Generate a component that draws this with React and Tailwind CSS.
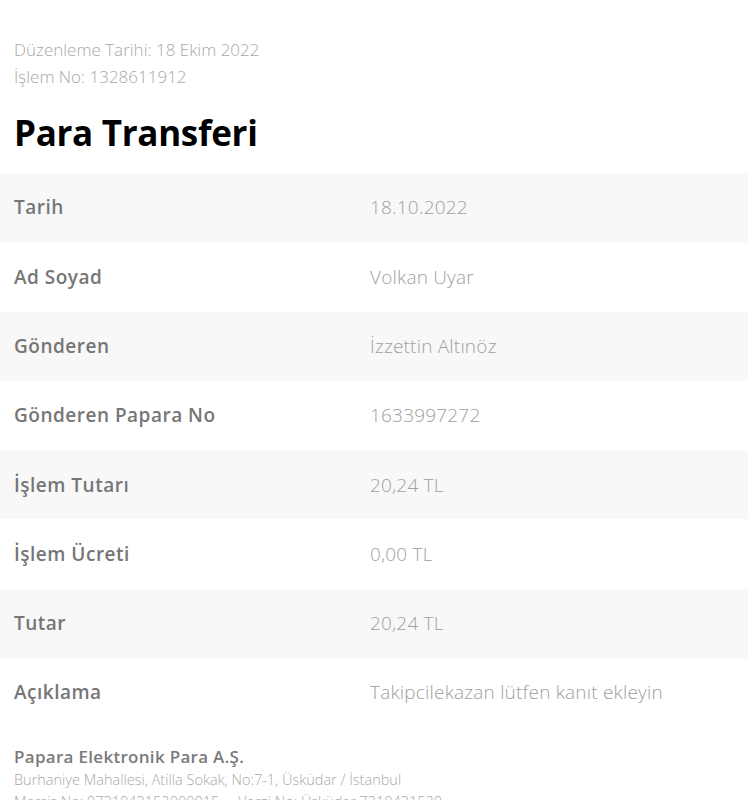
const rows = [
  { label: "Tarih", value: "18.10.2022" },
  { label: "Ad Soyad", value: "Volkan Uyar" },
  { label: "Gönderen", value: "İzzettin Altınöz" },
  { label: "Gönderen Papara No", value: "1633997272" },
  { label: "İşlem Tutarı", value: "20,24 TL" },
  { label: "İşlem Ücreti", value: "0,00 TL" },
  { label: "Tutar", value: "20,24 TL" },
  { label: "Açıklama", value: "Takipcilekazan lütfen kanıt ekleyin" },
];

const App = () => {
  return (
    <div className="min-h-screen bg-white font-['Open_Sans',sans-serif]">
      <div className="px-[14px] pt-[36px]">
        <p className="text-[17px] leading-[27px] font-light text-[#a8a8a8]">
          Düzenleme Tarihi: 18 Ekim 2022
        </p>
        <p className="text-[17px] leading-[27px] font-light text-[#a8a8a8]">
          İşlem No: 1328611912
        </p>
        <h1 className="mt-[22px] text-[35px] leading-[42px] font-bold tracking-[-0.3px] text-black">
          Para Transferi
        </h1>
      </div>

      <div className="mt-[19px]">
        {rows.map((row, i) => (
          <div
            key={row.label}
            className={
              "flex h-[69.3px] items-center px-[14px] " +
              (i % 2 === 0 ? "bg-[#f8f8f8]" : "bg-white")
            }
          >
            <span className="w-[356px] text-[19px] font-semibold tracking-[0.5px] text-[#767676]">
              {row.label}
            </span>
            <span className="text-[19px] font-light tracking-[0.2px] text-[#a0a0a0]">
              {row.value}
            </span>
          </div>
        ))}
      </div>

      <div className="px-[14px] pt-[18px] pb-4">
        <p className="text-[17px] leading-[24px] font-semibold tracking-[0.3px] text-[#7a7a7a]">
          Papara Elektronik Para A.Ş.
        </p>
        <p className="text-[14.5px] leading-[22px] font-light text-[#a8a8a8]">
          Burhaniye Mahallesi, Atilla Sokak, No:7-1, Üsküdar / İstanbul
        </p>
        <p className="text-[14.5px] leading-[22px] font-light text-[#a8a8a8]">
          Mersis No: 0731043152000015{"\u00a0\u00a0\u00a0\u00a0\u00a0"}Vergi No: Üsküdar 7310431520
        </p>
      </div>
    </div>
  );
};

export default App;
